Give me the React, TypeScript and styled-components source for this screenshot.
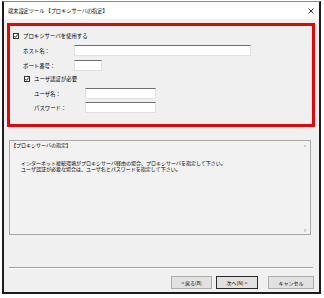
import React from 'react';
import styled, { createGlobalStyle } from 'styled-components';

const GlobalStyle = createGlobalStyle`
  body {
    margin: 0;
    background: #ffffff;
    font-family: "Noto Sans CJK JP", "Noto Sans", sans-serif;
    color: #000;
  }
`;

const Window = styled.div`
  margin: 1px 0 0 2px;
  width: 319px;
  height: 293px;
  box-sizing: border-box;
  border: 2px solid #1c1c1c;
  border-top: 1px solid #8a8a8a;
  display: flex;
  flex-direction: column;
  background: #f0f0f0;
`;

const TitleBar = styled.div`
  height: 17px;
  background: #ffffff;
  display: flex;
  align-items: center;
  justify-content: space-between;
  padding: 0 5px 0 4px;
  font-size: 5.2px;
`;

const Body = styled.div`
  flex: 1;
  display: flex;
  flex-direction: column;
`;

const RedFrame = styled.div`
  margin: 4px 4px 0 3px;
  height: 104px;
  box-sizing: border-box;
  border: 3px solid #f20000;
`;

const Panel = styled.div`
  height: 100%;
  box-sizing: border-box;
  border: 1px solid #fbfbfb;
  padding-top: 3px;
  display: flex;
  flex-direction: column;
`;

const Row = styled.div<{ $mt: number; $indent: number }>`
  display: flex;
  align-items: center;
  height: 11px;
  margin-top: ${(p) => p.$mt}px;
  padding-left: ${(p) => p.$indent}px;
  font-size: 5.4px;
  white-space: nowrap;
`;

const Label = styled.span`
  width: 51px;
  flex: none;
`;

const CheckLabel = styled.span`
  margin-left: 4px;
`;

const Input = styled.div<{ $w: number }>`
  width: ${(p) => p.$w}px;
  height: 11px;
  box-sizing: border-box;
  background: #ffffff;
  border: 1px solid #e0e0e0;
  border-top: 1px solid #6e6e6e;
`;

const DescBox = styled.div`
  margin: 13px 8px 0 5px;
  height: 95px;
  box-sizing: border-box;
  border: 1px solid #a8a8a8;
  background: #f2f2f2;
  display: flex;
`;

const DescText = styled.div`
  flex: 1;
  padding: 1px 0 0 1px;
  font-size: 5px;
  line-height: 6.5px;
`;

const DescLines = styled.div`
  margin-top: 11px;
  padding-left: 10px;
`;

const ScrollBar = styled.div`
  width: 10px;
  display: flex;
  flex-direction: column;
  justify-content: space-between;
  align-items: center;
  padding: 2px 0 1px;
  color: #9a9a9a;
  font-size: 5px;
`;

const Separator = styled.div`
  margin: 32px 6px 0 5px;
  height: 1px;
  background: #a0a0a0;
  border-bottom: 1px solid #ffffff;
`;

const ButtonBar = styled.div`
  margin-top: 7px;
  padding-right: 5px;
  display: flex;
  justify-content: flex-end;
`;

const Button = styled.div<{ $w: number; $default?: boolean; $gap: number }>`
  width: ${(p) => p.$w}px;
  height: 13px;
  margin-left: ${(p) => p.$gap}px;
  box-sizing: border-box;
  background: #e1e1e1;
  border: 1px solid ${(p) => (p.$default ? '#2a2a2a' : '#adadad')};
  display: flex;
  align-items: center;
  justify-content: center;
  font-size: 5px;
  white-space: nowrap;
`;

function CloseIcon() {
  return (
    <svg width="6" height="6" viewBox="0 0 6 6">
      <path d="M0.5 0.5 L5.5 5.5 M5.5 0.5 L0.5 5.5" stroke="#222" strokeWidth="0.9" />
    </svg>
  );
}

function CheckBox() {
  return (
    <svg width="6" height="6" viewBox="0 0 6 6" style={{ flex: 'none' }}>
      <rect x="0.5" y="0.5" width="5" height="5" fill="#fff" stroke="#333" strokeWidth="1" />
      <path d="M1.3 3 L2.5 4.3 L4.8 1.5" fill="none" stroke="#111" strokeWidth="0.9" />
    </svg>
  );
}

export default function App() {
  return (
    <>
      <GlobalStyle />
      <Window>
        <TitleBar>
          <span>端末設定ツール 【プロキシサーバの指定】</span>
          <CloseIcon />
        </TitleBar>
        <Body>
          <RedFrame>
            <Panel>
              <Row $mt={0} $indent={2}>
                <CheckBox />
                <CheckLabel>プロキシサーバを使用する</CheckLabel>
              </Row>
              <Row $mt={4} $indent={12}>
                <Label>ホスト名：</Label>
                <Input $w={177} />
              </Row>
              <Row $mt={4} $indent={12}>
                <Label>ポート番号：</Label>
                <Input $w={28} />
              </Row>
              <Row $mt={2} $indent={13}>
                <CheckBox />
                <CheckLabel>ユーザ認証が必要</CheckLabel>
              </Row>
              <Row $mt={4} $indent={23}>
                <Label>ユーザ名：</Label>
                <Input $w={71} />
              </Row>
              <Row $mt={3} $indent={23}>
                <Label>パスワード：</Label>
                <Input $w={71} />
              </Row>
            </Panel>
          </RedFrame>
          <DescBox>
            <DescText>
              【プロキシサーバの指定】
              <DescLines>
                インターネット接続環境がプロキシサーバ経由の場合、プロキシサーバを指定して下さい。
                <br />
                ユーザ認証が必要な場合は、ユーザ名とパスワードを指定して下さい。
              </DescLines>
            </DescText>
            <ScrollBar>
              <span>^</span>
              <span>v</span>
            </ScrollBar>
          </DescBox>
          <Separator />
          <ButtonBar>
            <Button $w={41} $gap={0}>&lt; 戻る(B)</Button>
            <Button $w={42} $gap={4} $default>次へ(N) &gt;</Button>
            <Button $w={46} $gap={10}>キャンセル</Button>
          </ButtonBar>
        </Body>
      </Window>
    </>
  );
}
